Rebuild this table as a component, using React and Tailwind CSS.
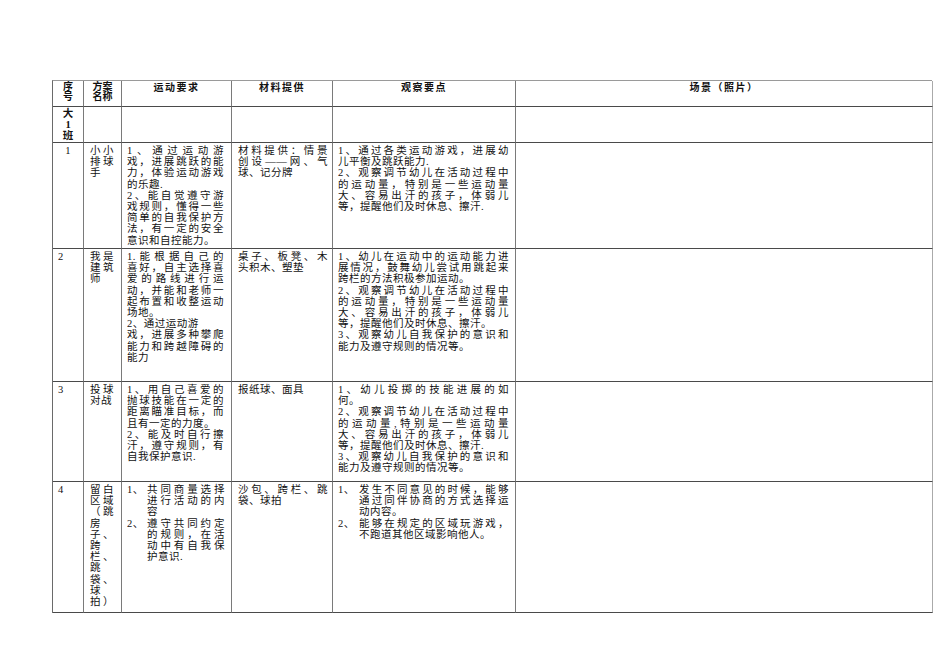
import React from "react";

const font = { fontFamily: '"Liberation Serif", "Noto Sans CJK SC", serif' };

// 一行文字：默认两端对齐，"!" 开头或段落最后一行左对齐
function Line({ text, last }) {
  const plain = text.startsWith("!");
  const t = plain ? text.slice(1) : text;
  return (
    <div
      className={
        "h-[11.2px] whitespace-nowrap " +
        (last || plain ? "text-left" : "text-justify [text-align-last:justify]")
      }
    >
      {t}
    </div>
  );
}

function Para({ lines }) {
  return (
    <div>
      {lines.map((l, i) => (
        <Line key={i} text={l} last={i === lines.length - 1} />
      ))}
    </div>
  );
}

function Item({ num, lines, w }) {
  return (
    <div className="flex">
      <div className={"shrink-0 " + w}>{num}</div>
      <div className="flex-1">
        <Para lines={lines} />
      </div>
    </div>
  );
}

const rows = [
  {
    no: "1",
    center: true,
    name: ["小小", "排球", "手"],
    req: [
      ["1、通过运动游", "戏，进展跳跃的能", "力，体验运动游戏", "的乐趣."],
      ["2、能自觉遵守游", "戏规则，懂得一些", "简单的自我保护方", "法，有一定的安全", "意识和自控能力。"],
    ],
    mat: ["材料提供：情景", "创设——网、气", "球、记分牌"],
    obs: [
      ["1、通过各类运动游戏，进展幼", "儿平衡及跳跃能力."],
      ["2、观察调节幼儿在活动过程中", "的运动量，特别是一些运动量", "大、容易出汗的孩子，体弱儿", "等，提醒他们及时休息、擦汗."],
    ],
  },
  {
    no: "2",
    name: ["我是", "建筑", "师"],
    req: [
      ["1.能根据自己的", "喜好，自主选择喜", "爱的路线进行运", "动，并能和老师一", "起布置和收整运动", "场地。"],
      ["!2、通过运动游", "戏，进展多种攀爬", "能力和跨越障碍的", "能力"],
    ],
    mat: ["桌子、板凳、木", "头积木、塑垫"],
    obs: [
      ["1、幼儿在运动中的运动能力进", "展情况，鼓舞幼儿尝试用跳起来", "跨栏的方法积极参加运动。"],
      ["2、观察调节幼儿在活动过程中", "的运动量，特别是一些运动量", "大、容易出汗的孩子，体弱儿", "等，提醒他们及时休息、擦汗。"],
      ["3、观察幼儿自我保护的意识和", "能力及遵守规则的情况等。"],
    ],
  },
  {
    no: "3",
    name: ["投球", "对战"],
    req: [
      ["1、用自己喜爱的", "抛球技能在一定的", "距离瞄准目标，而", "且有一定的力度。"],
      ["2、能及时自行擦", "汗，遵守规则，有", "自我保护意识."],
    ],
    mat: ["报纸球、面具"],
    obs: [
      ["1、幼儿投掷的技能进展的如", "何。"],
      ["2、观察调节幼儿在活动过程中", "的运动量,特别是一些运动量", "大、容易出汗的孩子，体弱儿", "等，提醒他们及时休息、擦汗."],
      ["3、观察幼儿自我保护的意识和", "能力及遵守规则的情况等。"],
    ],
  },
];

const cell = "border-r border-b border-r-[#7a7a7a] border-b-[#4a4a4a] overflow-hidden";
const body = "pt-[2px] text-[10.5px] tracking-[0.5px] leading-[11.2px] text-[#111]";
const head = "text-center text-[10px] leading-[10px] font-bold text-[#111]";

export default function App() {
  return (
    <div className="w-[950px] h-[672px] bg-white" style={font}>
      <div className="pt-[80px] pl-[52px]">
        <div className="grid w-[880px] grid-cols-[31px_38px_110px_101px_183px_417px] grid-rows-[26px_36px_106px_133px_100px_131px] border-l border-t border-l-[#6a6a6a] border-t-[#9a9a9a]">
          {/* 表头 */}
          <div className={cell + " pt-[1px] " + head}>
            <div>序</div>
            <div>号</div>
          </div>
          <div className={cell + " pt-[1px] " + head}>
            <div>方案</div>
            <div>名称</div>
          </div>
          <div className={cell + " pt-[2px] tracking-[1.5px] " + head}>运动要求</div>
          <div className={cell + " pt-[2px] tracking-[1.5px] " + head}>材料提供</div>
          <div className={cell + " pt-[2px] tracking-[1.5px] " + head}>观察要点</div>
          <div className={cell + " border-r-[#aaaaaa] pt-[2px] tracking-[1.5px] " + head}>场景（照片）</div>

          {/* 大1班 */}
          <div className={cell + " pt-[1px] text-center text-[10.5px] leading-[11.2px] font-bold text-[#111]"}>
            <div>大</div>
            <div>1</div>
            <div>班</div>
          </div>
          <div className={cell}></div>
          <div className={cell}></div>
          <div className={cell}></div>
          <div className={cell}></div>
          <div className={cell + " border-r-[#aaaaaa]"}></div>

          {rows.map((r) => (
            <React.Fragment key={r.no}>
              <div className={cell + " " + body + (r.center ? " text-center" : " pl-[5px]")}>{r.no}</div>
              <div className={cell + " " + body + " pl-[6px] pr-[7px]"}>
                <Para lines={r.name} />
              </div>
              <div className={cell + " " + body + " pl-[5px] pr-[7px]"}>
                {r.req.map((p, i) => (
                  <Para key={i} lines={p} />
                ))}
              </div>
              <div className={cell + " " + body + " pl-[6px] pr-[4px]"}>
                <Para lines={r.mat} />
              </div>
              <div className={cell + " " + body + " pl-[5px] pr-[6px]"}>
                {r.obs.map((p, i) => (
                  <Para key={i} lines={p} />
                ))}
              </div>
              <div className={cell + " border-r-[#aaaaaa]"}></div>
            </React.Fragment>
          ))}

          {/* 第4行 */}
          <div className={cell + " " + body + " pl-[5px]"}>4</div>
          <div className={cell + " " + body + " pl-[6px] pr-[7px]"}>
            {["留白", "区域", "（跳", "房", "子、", "跨", "栏、", "跳", "袋、", "球", "拍）"].map((t, i) => (
              <div key={i} className={"h-[11.2px] whitespace-nowrap " + (t.length > 1 ? "text-justify [text-align-last:justify]" : "")}>
                {t}
              </div>
            ))}
          </div>
          <div className={cell + " " + body + " pl-[5px] pr-[6px]"}>
            <Item num="1、" w="w-[20px]" lines={["共同商量选择", "进行活动的内", "容"]} />
            <Item num="2、" w="w-[20px]" lines={["遵守共同约定", "的规则，在活", "动中有自我保", "护意识."]} />
          </div>
          <div className={cell + " " + body + " pl-[6px] pr-[4px]"}>
            <Para lines={["沙包、跨栏、跳", "袋、球拍"]} />
          </div>
          <div className={cell + " " + body + " pl-[5px] pr-[6px]"}>
            <Item num="1、" w="w-[21px]" lines={["发生不同意见的时候，能够", "通过同伴协商的方式选择运", "动内容。"]} />
            <Item num="2、" w="w-[21px]" lines={["能够在规定的区域玩游戏，", "不跑道其他区域影响他人。"]} />
          </div>
          <div className={cell + " border-r-[#aaaaaa]"}></div>
        </div>
      </div>
    </div>
  );
}
